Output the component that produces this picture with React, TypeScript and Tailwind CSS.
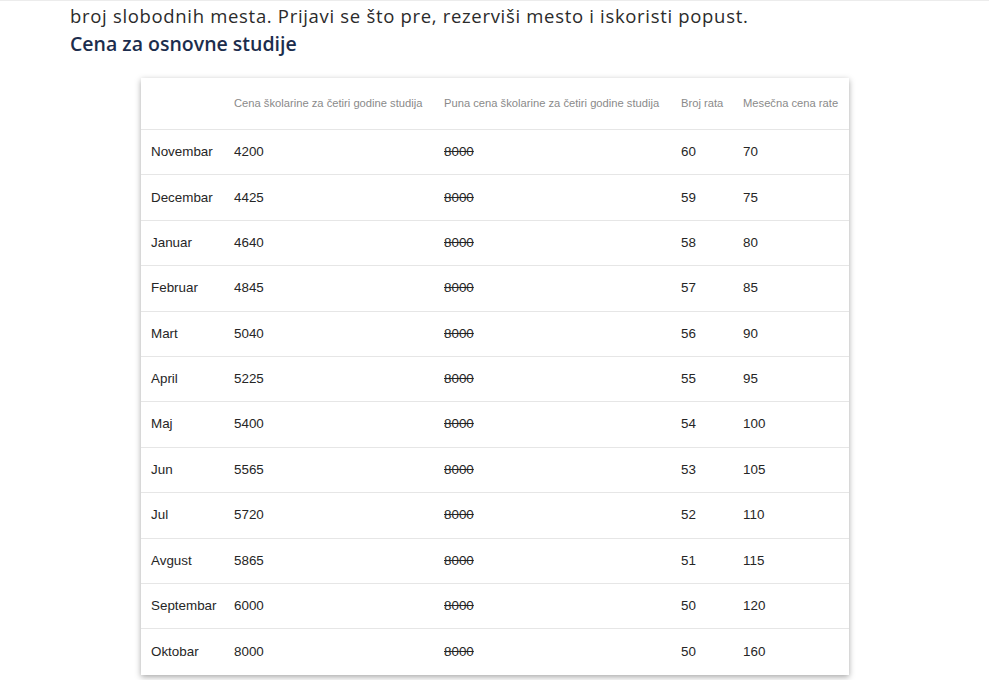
import React from "react";

const rows: [string, string, string, string][] = [
  ["Novembar", "4200", "60", "70"],
  ["Decembar", "4425", "59", "75"],
  ["Januar", "4640", "58", "80"],
  ["Februar", "4845", "57", "85"],
  ["Mart", "5040", "56", "90"],
  ["April", "5225", "55", "95"],
  ["Maj", "5400", "54", "100"],
  ["Jun", "5565", "53", "105"],
  ["Jul", "5720", "52", "110"],
  ["Avgust", "5865", "51", "115"],
  ["Septembar", "6000", "50", "120"],
  ["Oktobar", "8000", "50", "160"],
];

const cols = "grid grid-cols-[83px_210px_237px_62px_116px]";

export default function App() {
  return (
    <div className="w-[989px] h-[680px] overflow-hidden bg-white border-t border-[#ececec]">
      <div className="pl-[70px]" style={{ fontFamily: '"Open Sans", sans-serif' }}>
        <p className="text-[18.5px] tracking-[0.68px] leading-[28px] text-[#2b2b2b] pt-[1px] whitespace-nowrap">
          broj slobodnih mesta. Prijavi se što pre, rezerviši mesto i iskoristi popust.
        </p>
        <h2 className="text-[19.5px] leading-[28px] font-semibold text-[#1c2d4d]">
          Cena za osnovne studije
        </h2>
      </div>
      <div
        className="ml-[141px] mt-[20px] w-[708px] bg-white shadow-[0_2px_6px_rgba(0,0,0,0.35)]"
        style={{ fontFamily: '"Liberation Sans", Arial, sans-serif' }}
      >
        <div className={`${cols} h-[52px] items-center text-[11.2px] text-[#8a8a8a] border-b border-[#e6e6e6] whitespace-nowrap`}>
          <div className="pl-[10px]"></div>
          <div className="pl-[10px]">Cena školarine za četiri godine studija</div>
          <div className="pl-[10px]">Puna cena školarine za četiri godine studija</div>
          <div className="pl-[10px]">Broj rata</div>
          <div className="pl-[10px]">Mesečna cena rate</div>
        </div>
        {rows.map((r, i) => (
          <div
            key={r[0]}
            className={`${cols} h-[45.4px] items-center text-[13.4px] text-[#262626] ${
              i < rows.length - 1 ? "border-b border-[#e6e6e6]" : ""
            }`}
          >
            <div className="pl-[10px]">{r[0]}</div>
            <div className="pl-[10px]">{r[1]}</div>
            <div className="pl-[10px] line-through">8000</div>
            <div className="pl-[10px]">{r[2]}</div>
            <div className="pl-[10px]">{r[3]}</div>
          </div>
        ))}
      </div>
    </div>
  );
}
